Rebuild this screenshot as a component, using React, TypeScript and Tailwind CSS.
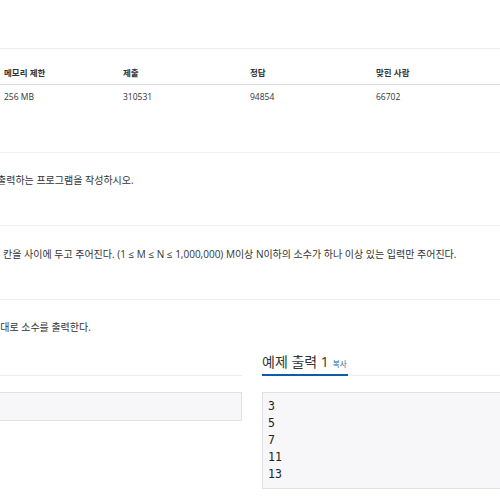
import React from "react";

const font = { fontFamily: '"Open Sans", "Noto Sans CJK KR", sans-serif' };

export default function App() {
  return (
    <div className="w-[500px] h-[500px] overflow-hidden bg-white text-[#333]" style={font}>
      <div className="h-[49px] border-b border-[#eeeeee]" />
      {/* table */}
      <div className="grid grid-cols-[119px_127px_126px_1fr] h-[36px] border-b border-[#dddddd] items-end pb-[5px] text-[8.5px] leading-[12px] font-bold">
        <div className="pl-[4px]">메모리 제한</div>
        <div className="pl-[4px]">제출</div>
        <div className="pl-[4px]">정답</div>
        <div className="pl-[4px]">맞힌 사람</div>
      </div>
      <div className="grid grid-cols-[119px_127px_126px_1fr] h-[26px] pt-[6px] text-[8.5px] leading-[12px]">
        <div className="pl-[4px]">256 MB</div>
        <div className="pl-[4px]">310531</div>
        <div className="pl-[4px]">94854</div>
        <div className="pl-[4px]">66702</div>
      </div>
      <div className="h-[42px] border-b border-[#f2f2f2]" />
      <p className="mt-[19px] text-[10px] leading-[16px] whitespace-nowrap ml-[-3px]">출력하는 프로그램을 작성하시오.</p>
      <div className="h-[38px] border-b border-[#f2f2f2]" />
      <p className="mt-[20px] text-[10px] leading-[16px] whitespace-nowrap pl-[3px]">
        칸을 사이에 두고 주어진다. (1 ≤ M ≤ N ≤ 1,000,000) M이상 N이하의 소수가 하나 이상 있는 입력만 주어진다.
      </p>
      <div className="h-[38px] border-b border-[#f2f2f2]" />
      <p className="mt-[19px] text-[10px] leading-[16px] whitespace-nowrap ml-[-9px]">서대로 소수를 출력한다.</p>
      {/* samples */}
      <div className="flex gap-[20px]">
        <div className="w-[242px] shrink-0">
          <div className="h-[41px] border-b border-[#eeeeee]" />
          <pre className="mt-[16px] bg-[#f7f7f9] border border-l-0 border-[#e1e1e8] px-[5px] py-[5px] text-[11px] leading-[17px]" style={{ fontFamily: '"DejaVu Sans Mono", monospace' }}>{" "}</pre>
        </div>
        <div className="w-[260px] shrink-0">
          <div className="h-[41px] border-b border-[#eeeeee] flex items-end">
            <span className="-mb-px border-b-2 border-[#0e5ca8] pb-[4px] pr-[1px] flex items-baseline gap-[4px]">
              <span className="text-[14px] leading-[17px] text-[#333]">예제 출력 1</span>
              <span className="text-[7.5px] leading-[10px] text-[#1d5fa5]">복사</span>
            </span>
          </div>
          <pre className="mt-[16px] bg-[#f7f7f9] border border-r-0 border-[#e1e1e8] px-[5px] py-[5px] text-[11.5px] leading-[17px] text-[#222]" style={{ fontFamily: '"DejaVu Sans Mono", monospace' }}>
{`3
5
7
11
13`}
          </pre>
        </div>
      </div>
    </div>
  );
}
